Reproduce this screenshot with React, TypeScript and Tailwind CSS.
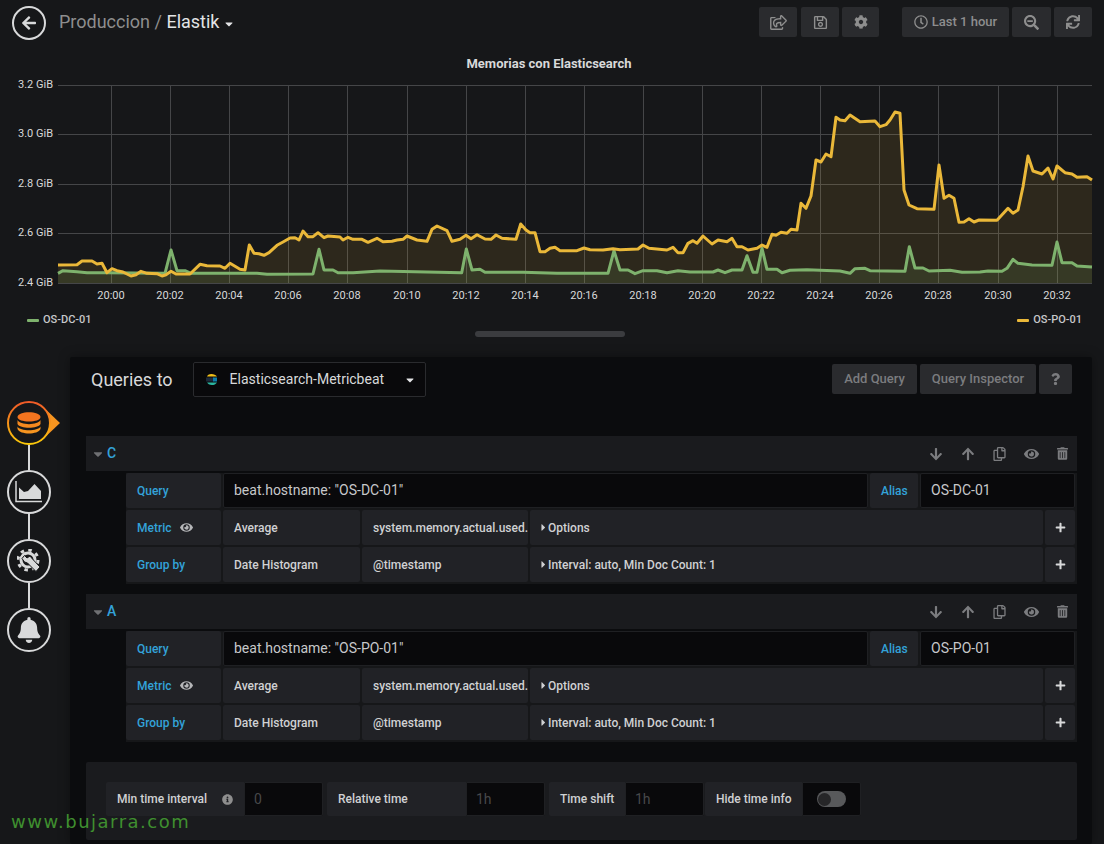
import {
  FaArrowDown,
  FaArrowLeft,
  FaArrowUp,
  FaBell,
  FaCaretDown,
  FaCaretRight,
  FaCog,
  FaEye,
  FaInfoCircle,
  FaPlus,
  FaQuestion,
  FaRegClock,
  FaRegCopy,
  FaRegSave,
  FaRegShareSquare,
  FaSearchMinus,
  FaSync,
  FaTrashAlt,
} from 'react-icons/fa';

const yellow: [number, number][] = [
  [58, 265], [77, 264.7], [82, 261], [92, 261], [97, 264], [102, 263.3], [107, 272.7], [112, 268.7], [117, 270.7], [123, 272],
  [131, 276], [136, 274.7], [141, 271.3], [147, 273.3], [157, 273.7], [162, 276], [166, 274.7], [171, 271.3], [176, 274], [190, 274],
  [200, 264.3], [207, 265.7], [220, 266], [225, 268.3], [230, 263.3], [240, 269.3], [245, 270], [249.3, 245], [254, 253.3], [259, 253.7],
  [264, 255.3], [269, 252.7], [277, 245.3], [283, 242], [290, 238], [295, 237.7], [299, 240], [303, 231], [308, 236.7], [313, 236.7],
  [318, 232.7], [324, 237.7], [328, 236], [340, 237], [343, 240], [348, 237.3], [353, 239.3], [362, 239.3], [368, 242.3], [377, 238.3],
  [383, 241.7], [392, 241.3], [397, 240], [403, 239.3], [407, 236], [417, 240], [427, 241.3], [432, 229.3], [437, 226], [447, 230.7],
  [452, 241.3], [460, 239.3], [466, 235.3], [471, 238.7], [477, 234.7], [485, 239], [491, 239.3], [496, 235], [502, 238.3], [516, 239.3],
  [520.7, 224], [526, 230], [530, 232.7], [535, 232.7], [540, 251.7], [545, 251.7], [550, 248.3], [555, 247.3], [560, 250.7], [577, 250.7],
  [584, 248], [590, 249.7], [603, 250], [613, 248.7], [620, 249.7], [638, 249], [643, 245], [649, 248.3], [667, 250], [673, 247.3],
  [678, 252.7], [683, 252.7], [688, 243.3], [693, 240.7], [697, 243.3], [703, 236], [712, 244], [718, 240], [727, 241.7], [732, 238.3],
  [737, 246.7], [742, 246.7], [748, 250], [757, 248.3], [762, 245], [767, 247.3], [772, 234.3], [776, 235.3], [781, 232.3], [787, 233.3],
  [791, 229.3], [797, 230], [801, 203.3], [806, 208.3], [811, 196], [816, 160], [821, 162], [826, 154], [831, 156.7], [836, 117.3],
  [840, 120], [845, 120.7], [850, 115], [860, 121.7], [875, 121], [880, 126.7], [886, 124.7], [890, 120], [895, 112], [900, 113.3],
  [904, 190], [909, 205], [917, 208.7], [934, 209.3], [939, 165], [944, 198.3], [949, 195.3], [954, 198.3], [959, 222.3], [964, 222],
  [969, 218.7], [974, 222], [979, 220], [997, 220.3], [1008, 208.3], [1013, 213.3], [1018, 210], [1023, 186.7], [1028, 156], [1033, 171],
  [1042, 174], [1048, 168], [1053, 179], [1057, 166], [1065, 172.7], [1072, 174], [1077, 177.3], [1087, 176.7], [1092, 180],
];

const green: [number, number][] = [
  [58, 273.3], [63, 270.7], [77, 271.7], [87, 272.7], [107, 272.7], [165, 273.3], [171, 250], [177, 270.7], [185, 270.7], [191, 273.3],
  [233, 273.3], [257, 273.3], [267, 274.3], [313, 274], [319, 249.3], [324, 270], [333, 270], [338, 272.7], [353, 272.7], [380, 271],
  [461.7, 272.7], [466.3, 249], [472, 270], [480, 269.3], [485, 272.3], [523, 272.3], [557, 273.3], [608, 273.3], [614, 250.7], [620, 270],
  [628, 270], [635, 273.7], [643, 270.7], [657, 270.7], [667, 272.7], [678, 270.7], [690, 272], [713, 272], [718, 270], [725, 272.7],
  [732, 270], [742, 270], [747, 255.7], [753, 272.3], [757, 272.3], [762, 248.3], [767, 269.3], [777, 269.3], [782, 272.7], [790, 270.3],
  [807, 269.7], [840, 271], [850, 273.3], [855, 268.7], [865, 268.3], [870, 270.7], [905, 271.3], [909.3, 246.7], [915, 268], [923, 268],
  [929, 271], [950, 270.3], [962, 272.3], [980, 272], [988, 271], [1002, 271.3], [1007, 268.3], [1013, 259.3], [1018, 263.3], [1032, 265],
  [1052, 265.3], [1057, 242], [1062, 262.7], [1072, 262.7], [1077, 266], [1092, 267],
];

const toLine = (pts: [number, number][]) => pts.map((p) => p.join(',')).join(' ');
const toArea = (pts: [number, number][]) => `58,283 ${toLine(pts)} 1092,283`;

const yTicks: [string, number][] = [['3.2 GiB', 85], ['3.0 GiB', 134], ['2.8 GiB', 184], ['2.6 GiB', 233], ['2.4 GiB', 283]];
const times = ['20:00', '20:02', '20:04', '20:06', '20:08', '20:10', '20:12', '20:14', '20:16', '20:18', '20:20', '20:22', '20:24', '20:26', '20:28', '20:30', '20:32'];

function Chart() {
  return (
    <svg className="block w-[1104px] h-[234px]" viewBox="0 76 1104 234">
      {yTicks.map(([label, y]) => (
        <g key={label}>
          <line x1="58" x2="1092" y1={y + 0.5} y2={y + 0.5} stroke="#454648" />
          <text x="53" y={y + 3} textAnchor="end" fontSize="11" fill="#d8d9da" fontFamily="Roboto, sans-serif">{label}</text>
        </g>
      ))}
      {times.map((t, i) => {
        const x = Math.round(111 + i * 59.1);
        return (
          <g key={t}>
            <line x1={x + 0.5} x2={x + 0.5} y1="85" y2="283" stroke="#454648" />
            <text x={x} y="299" textAnchor="middle" fontSize="11" fill="#d8d9da" fontFamily="Roboto, sans-serif">{t}</text>
          </g>
        );
      })}
      <polygon points={toArea(yellow)} fill="#eab839" fillOpacity="0.11" />
      <polygon points={toArea(green)} fill="#7eb26d" fillOpacity="0.12" />
      <polyline points={toLine(green)} fill="none" stroke="#7eb26d" strokeWidth="3" strokeLinejoin="round" />
      <polyline points={toLine(yellow)} fill="none" stroke="#eab839" strokeWidth="3" strokeLinejoin="round" />
    </svg>
  );
}

function TopButton({ className, children }: { className: string; children: React.ReactNode }) {
  return (
    <div className={`h-[30px] flex items-center justify-center gap-[4px] rounded-[2px] bg-[#2a2b2e] text-[#8e8e8e] ${className}`}>
      {children}
    </div>
  );
}

function Cell({ className = '', children }: { className?: string; children?: React.ReactNode }) {
  return (
    <div className={`h-[35px] flex items-center overflow-hidden whitespace-nowrap rounded-[2px] bg-[#212226] text-[12px] font-medium ${className}`}>
      {children}
    </div>
  );
}

function InputCell({ className = '', children }: { className?: string; children: React.ReactNode }) {
  return (
    <div className={`h-[35px] flex items-center rounded-[2px] border border-[#1f2023] bg-[#09090b] pl-[10px] text-[14px] text-[#c7c8ca] ${className}`}>
      {children}
    </div>
  );
}

function AddCell() {
  return (
    <Cell className="w-[30px] justify-center text-[#d8d9da]">
      <FaPlus className="w-[11px] h-[11px]" />
    </Cell>
  );
}

function QueryBlock({ letter, host }: { letter: string; host: string }) {
  return (
    <div className="mb-[10px]">
      <div className="h-[35px] flex items-center bg-[#1a1b1e] pl-[5px] pr-[9px]">
        <FaCaretDown className="w-[14px] h-[14px] text-[#6f7073]" />
        <span className="ml-[2px] text-[14px] font-medium text-[#33a2d9]">{letter}</span>
        <div className="ml-auto flex items-center gap-[18px] text-[#7b7c7f]">
          <FaArrowDown className="w-[14px] h-[14px]" />
          <FaArrowUp className="w-[14px] h-[14px]" />
          <FaRegCopy className="w-[13px] h-[14px]" />
          <FaEye className="w-[15px] h-[14px]" />
          <FaTrashAlt className="w-[11px] h-[13px]" />
        </div>
      </div>
      <div className="ml-[40px] mt-[2px] flex flex-col gap-[2px] bg-[#161719] pb-[2px]">
        <div className="flex gap-[2px]">
          <Cell className="w-[95px] pl-[11px] text-[#33a2d9]">Query</Cell>
          <InputCell className="w-[645px]">beat.hostname: "{host}"</InputCell>
          <Cell className="w-[48px] pl-[11px] text-[#33a2d9]">Alias</Cell>
          <InputCell className="w-[155px]">{host}</InputCell>
        </div>
        <div className="flex gap-[2px]">
          <Cell className="w-[95px] pl-[11px] text-[#33a2d9]">
            Metric
            <FaEye className="ml-[9px] w-[13px] h-[13px] text-[#b5b6b8]" />
          </Cell>
          <Cell className="w-[137px] pl-[11px] text-[#d0d1d3]">Average</Cell>
          <Cell className="w-[166px] pl-[11px] text-[#d0d1d3]">system.memory.actual.used.b</Cell>
          <Cell className="w-[513px] pl-[9px] text-[#d0d1d3]">
            <FaCaretRight className="w-[9px] h-[11px]" />
            Options
          </Cell>
          <AddCell />
        </div>
        <div className="flex gap-[2px]">
          <Cell className="w-[95px] pl-[11px] text-[#33a2d9]">Group by</Cell>
          <Cell className="w-[137px] pl-[11px] text-[#d0d1d3]">Date Histogram</Cell>
          <Cell className="w-[166px] pl-[11px] text-[#d0d1d3]">@timestamp</Cell>
          <Cell className="w-[513px] pl-[9px] text-[#d0d1d3]">
            <FaCaretRight className="w-[9px] h-[11px]" />
            Interval: auto, Min Doc Count: 1
          </Cell>
          <AddCell />
        </div>
      </div>
    </div>
  );
}

function OptionLabel({ className, children }: { className: string; children: React.ReactNode }) {
  return (
    <div className={`h-[34px] flex items-center rounded-l-[2px] bg-[#212226] pl-[11px] text-[12px] font-medium text-[#d0d1d3] ${className}`}>
      {children}
    </div>
  );
}

function OptionInput({ className, children }: { className: string; children?: React.ReactNode }) {
  return (
    <div className={`h-[34px] flex items-center rounded-r-[2px] border border-[#1f2023] bg-[#09090b] text-[14px] text-[#47484a] ${className}`}>
      {children}
    </div>
  );
}

function Ring({ children }: { children: React.ReactNode }) {
  return (
    <div className="w-[44px] h-[44px] flex items-center justify-center rounded-full border-[2px] border-[#d8d9da] text-[#d8d9da]">
      {children}
    </div>
  );
}

function Connector() {
  return <div className="ml-[21px] w-[2px] h-[25px] bg-[#d8d9da]" />;
}

function Sidebar() {
  return (
    <div className="w-[70px] pt-[44px] pl-[7px]">
      <svg className="block w-[54px] h-[44px]" viewBox="0 0 54 44">
        <defs>
          <linearGradient id="nav" x1="0" y1="0" x2="0" y2="1">
            <stop offset="0" stopColor="#f05a28" />
            <stop offset="1" stopColor="#fbca0a" />
          </linearGradient>
        </defs>
        <path d="M34 4 L53 22 L34 40 Z" fill="#f79520" />
        <circle cx="22" cy="22" r="21" fill="#161719" stroke="url(#nav)" strokeWidth="2" />
        <path d="M10.500 16 C10.500 9.500 33.500 9.500 33.500 16 C33.500 22 10.500 22 10.500 16 Z" fill="#f4741f" />
        <path d="M10.500 19 C13 24.500 31 24.500 33.500 19 V23 C31 28 13 28 10.500 23 Z" fill="#f5891f" />
        <path d="M10.500 25.500 C13 30.500 31 30.500 33.500 25.500 V28 C31 34 13 34 10.500 28 Z" fill="#f79520" />
      </svg>
      <Connector />
      <Ring>
        <svg className="w-[28px] h-[24px]" viewBox="0 0 28 24">
          <path d="M1 1 V21.500 H27" fill="none" stroke="#d8d9da" strokeWidth="1.500" />
          <path d="M4 19 V7.500 L9 12 L13 11 L19.500 4 L26 11 V19 Z" fill="#d8d9da" />
        </svg>
      </Ring>
      <Connector />
      <Ring>
        <svg className="w-[24px] h-[24px]" viewBox="0 0 24 24">
          <circle cx="11" cy="11" r="7" fill="none" stroke="#d8d9da" strokeWidth="3" />
          <circle cx="11" cy="11" r="10" fill="none" stroke="#d8d9da" strokeWidth="3" strokeDasharray="3.500 4.350" />
          <path d="M7.500 6.500 L10 9 L13 7 L15 9.500 L23 18 L19 22.500 L10.500 14 L7.500 13 L5 9.500 Z" fill="#d8d9da" stroke="#161719" strokeWidth="1" />
        </svg>
      </Ring>
      <Connector />
      <Ring>
        <FaBell className="w-[24px] h-[26px]" />
      </Ring>
    </div>
  );
}

export default function App() {
  return (
    <div className="relative w-[1104px] h-[844px] overflow-hidden bg-[#161719] font-['Roboto',sans-serif]">
      {/* top bar */}
      <div className="h-[50px] flex items-start">
        <div className="mt-[6px] ml-[12px] w-[34px] h-[34px] flex items-center justify-center rounded-full border-[2px] border-[#d8d9da] text-[#d8d9da]">
          <FaArrowLeft className="w-[16px] h-[16px]" />
        </div>
        <div className="mt-[10px] ml-[13px] flex items-center text-[18px] leading-[24px] text-[#8e8e8e]">
          Produccion&nbsp;/&nbsp;<span className="text-[#e3e4e6]">Elastik</span>
          <FaCaretDown className="ml-[4px] mt-[3px] w-[12px] h-[12px] text-[#e3e4e6]" />
        </div>
        <div className="ml-auto mt-[7px] mr-[12px] flex">
          <TopButton className="w-[38px]"><FaRegShareSquare className="w-[17px] h-[15px]" /></TopButton>
          <TopButton className="w-[38px] ml-[4px]"><FaRegSave className="w-[15px] h-[15px]" /></TopButton>
          <TopButton className="w-[37px] ml-[3px]"><FaCog className="w-[14px] h-[14px]" /></TopButton>
          <TopButton className="w-[107px] ml-[23px] text-[13px] font-medium">
            <FaRegClock className="w-[14px] h-[14px]" />
            Last 1 hour
          </TopButton>
          <TopButton className="w-[39px] ml-[3px]"><FaSearchMinus className="w-[15px] h-[15px]" /></TopButton>
          <TopButton className="w-[38px] ml-[3px]"><FaSync className="w-[14px] h-[14px]" /></TopButton>
        </div>
      </div>

      {/* graph panel */}
      <div className="h-[26px] pt-[6px] pr-[6px] text-center text-[13px] leading-[16px] font-bold text-[#d8d9da]">
        Memorias con Elasticsearch
      </div>
      <Chart />
      <div className="h-[20px] flex items-center justify-between pl-[27px] pr-[22px] text-[11px] font-medium text-[#c7c8ca]">
        <div className="flex items-center gap-[4px]">
          <span className="w-[12px] h-[3px] rounded-[1px] bg-[#7eb26d]" />
          OS-DC-01
        </div>
        <div className="flex items-center gap-[4px]">
          <span className="w-[12px] h-[3px] rounded-[1px] bg-[#eab839]" />
          OS-PO-01
        </div>
      </div>
      <div className="mt-[1px] ml-[475px] w-[150px] h-[6px] rounded-full bg-[#3b3c3f]" />

      {/* query editor */}
      <div className="mt-[20px] flex h-[487px]">
        <Sidebar />
        <div className="w-[1022px] h-full rounded-[2px] bg-[#0b0c0e] pl-[16px] pr-[15px] pt-[5px] shadow-[0_0_12px_rgba(0,0,0,0.35)]">
          <div className="h-[35px] flex items-center">
            <span className="ml-[5px] -mt-[1px] text-[18px] text-[#d8d9da]">Queries to</span>
            <div className="ml-[20px] w-[233px] h-[35px] flex items-center rounded-[2px] border border-[#2a2b2e] bg-[#09090b] pl-[11px] pr-[9px] text-[14px] text-[#d8d9da]">
              <svg className="w-[13px] h-[13px]" viewBox="0 0 13 13">
                <path d="M2 4 C2 0 10 0 12 3.500 H2 Z" fill="#f0bf1a" />
                <path d="M1 4.500 H9 V8.500 H1 Z" fill="#1d2a3a" />
                <path d="M8 4.500 H12 V8.500 H8 Z" fill="#0e7dab" />
                <path d="M2 9 C3 13 10 13 12 9.500 H2 Z" fill="#2bb5a0" />
              </svg>
              <span className="ml-[12px] -mt-[1px]">Elasticsearch-Metricbeat</span>
              <FaCaretDown className="ml-auto w-[12px] h-[12px] text-[#e3e4e6]" />
            </div>
            <div className="ml-auto mr-[5px] -mt-[1px] flex gap-[3px] text-[13px] font-medium text-[#7b7c7f]">
              <div className="w-[85px] h-[30px] flex items-center justify-center rounded-[2px] bg-[#2a2b2e]">Add Query</div>
              <div className="w-[116px] h-[30px] flex items-center justify-center rounded-[2px] bg-[#2a2b2e]">Query Inspector</div>
              <div className="w-[33px] h-[30px] flex items-center justify-center rounded-[2px] bg-[#2a2b2e]">
                <FaQuestion className="w-[11px] h-[12px]" />
              </div>
            </div>
          </div>

          <div className="mt-[39px]">
            <QueryBlock letter="C" host="OS-DC-01" />
            <QueryBlock letter="A" host="OS-PO-01" />
          </div>

          <div className="mt-[20px] h-[78px] flex gap-[3px] rounded-[2px] bg-[#1a1b1e] pl-[20px] pt-[20px]">
            <div className="flex">
              <OptionLabel className="w-[138px]">
                Min time interval
                <FaInfoCircle className="ml-[15px] w-[11px] h-[11px] text-[#8e8e8e]" />
              </OptionLabel>
              <OptionInput className="w-[79px] pl-[9px]">0</OptionInput>
            </div>
            <div className="ml-[1px] flex">
              <OptionLabel className="w-[139px]">Relative time</OptionLabel>
              <OptionInput className="w-[79px] pl-[9px]">1h</OptionInput>
            </div>
            <div className="ml-[1px] flex">
              <OptionLabel className="w-[76px]">Time shift</OptionLabel>
              <OptionInput className="w-[79px] pl-[9px]">1h</OptionInput>
            </div>
            <div className="-ml-[2px] flex">
              <OptionLabel className="w-[97px]">Hide time info</OptionLabel>
              <OptionInput className="w-[59px] pl-[14px]">
                <span className="w-[29px] h-[16px] flex items-center rounded-full bg-[#58595b] pl-[1px]">
                  <span className="w-[13px] h-[13px] rounded-full bg-[#262628]" />
                </span>
              </OptionInput>
            </div>
          </div>
        </div>
      </div>

      {/* watermark */}
      <div className="absolute left-[11px] top-[809px] font-['DejaVu_Sans',sans-serif] text-[18px] leading-[26px] tracking-[1.5px] text-[#3f8f2f]">
        www.bujarra.com
      </div>
    </div>
  );
}
